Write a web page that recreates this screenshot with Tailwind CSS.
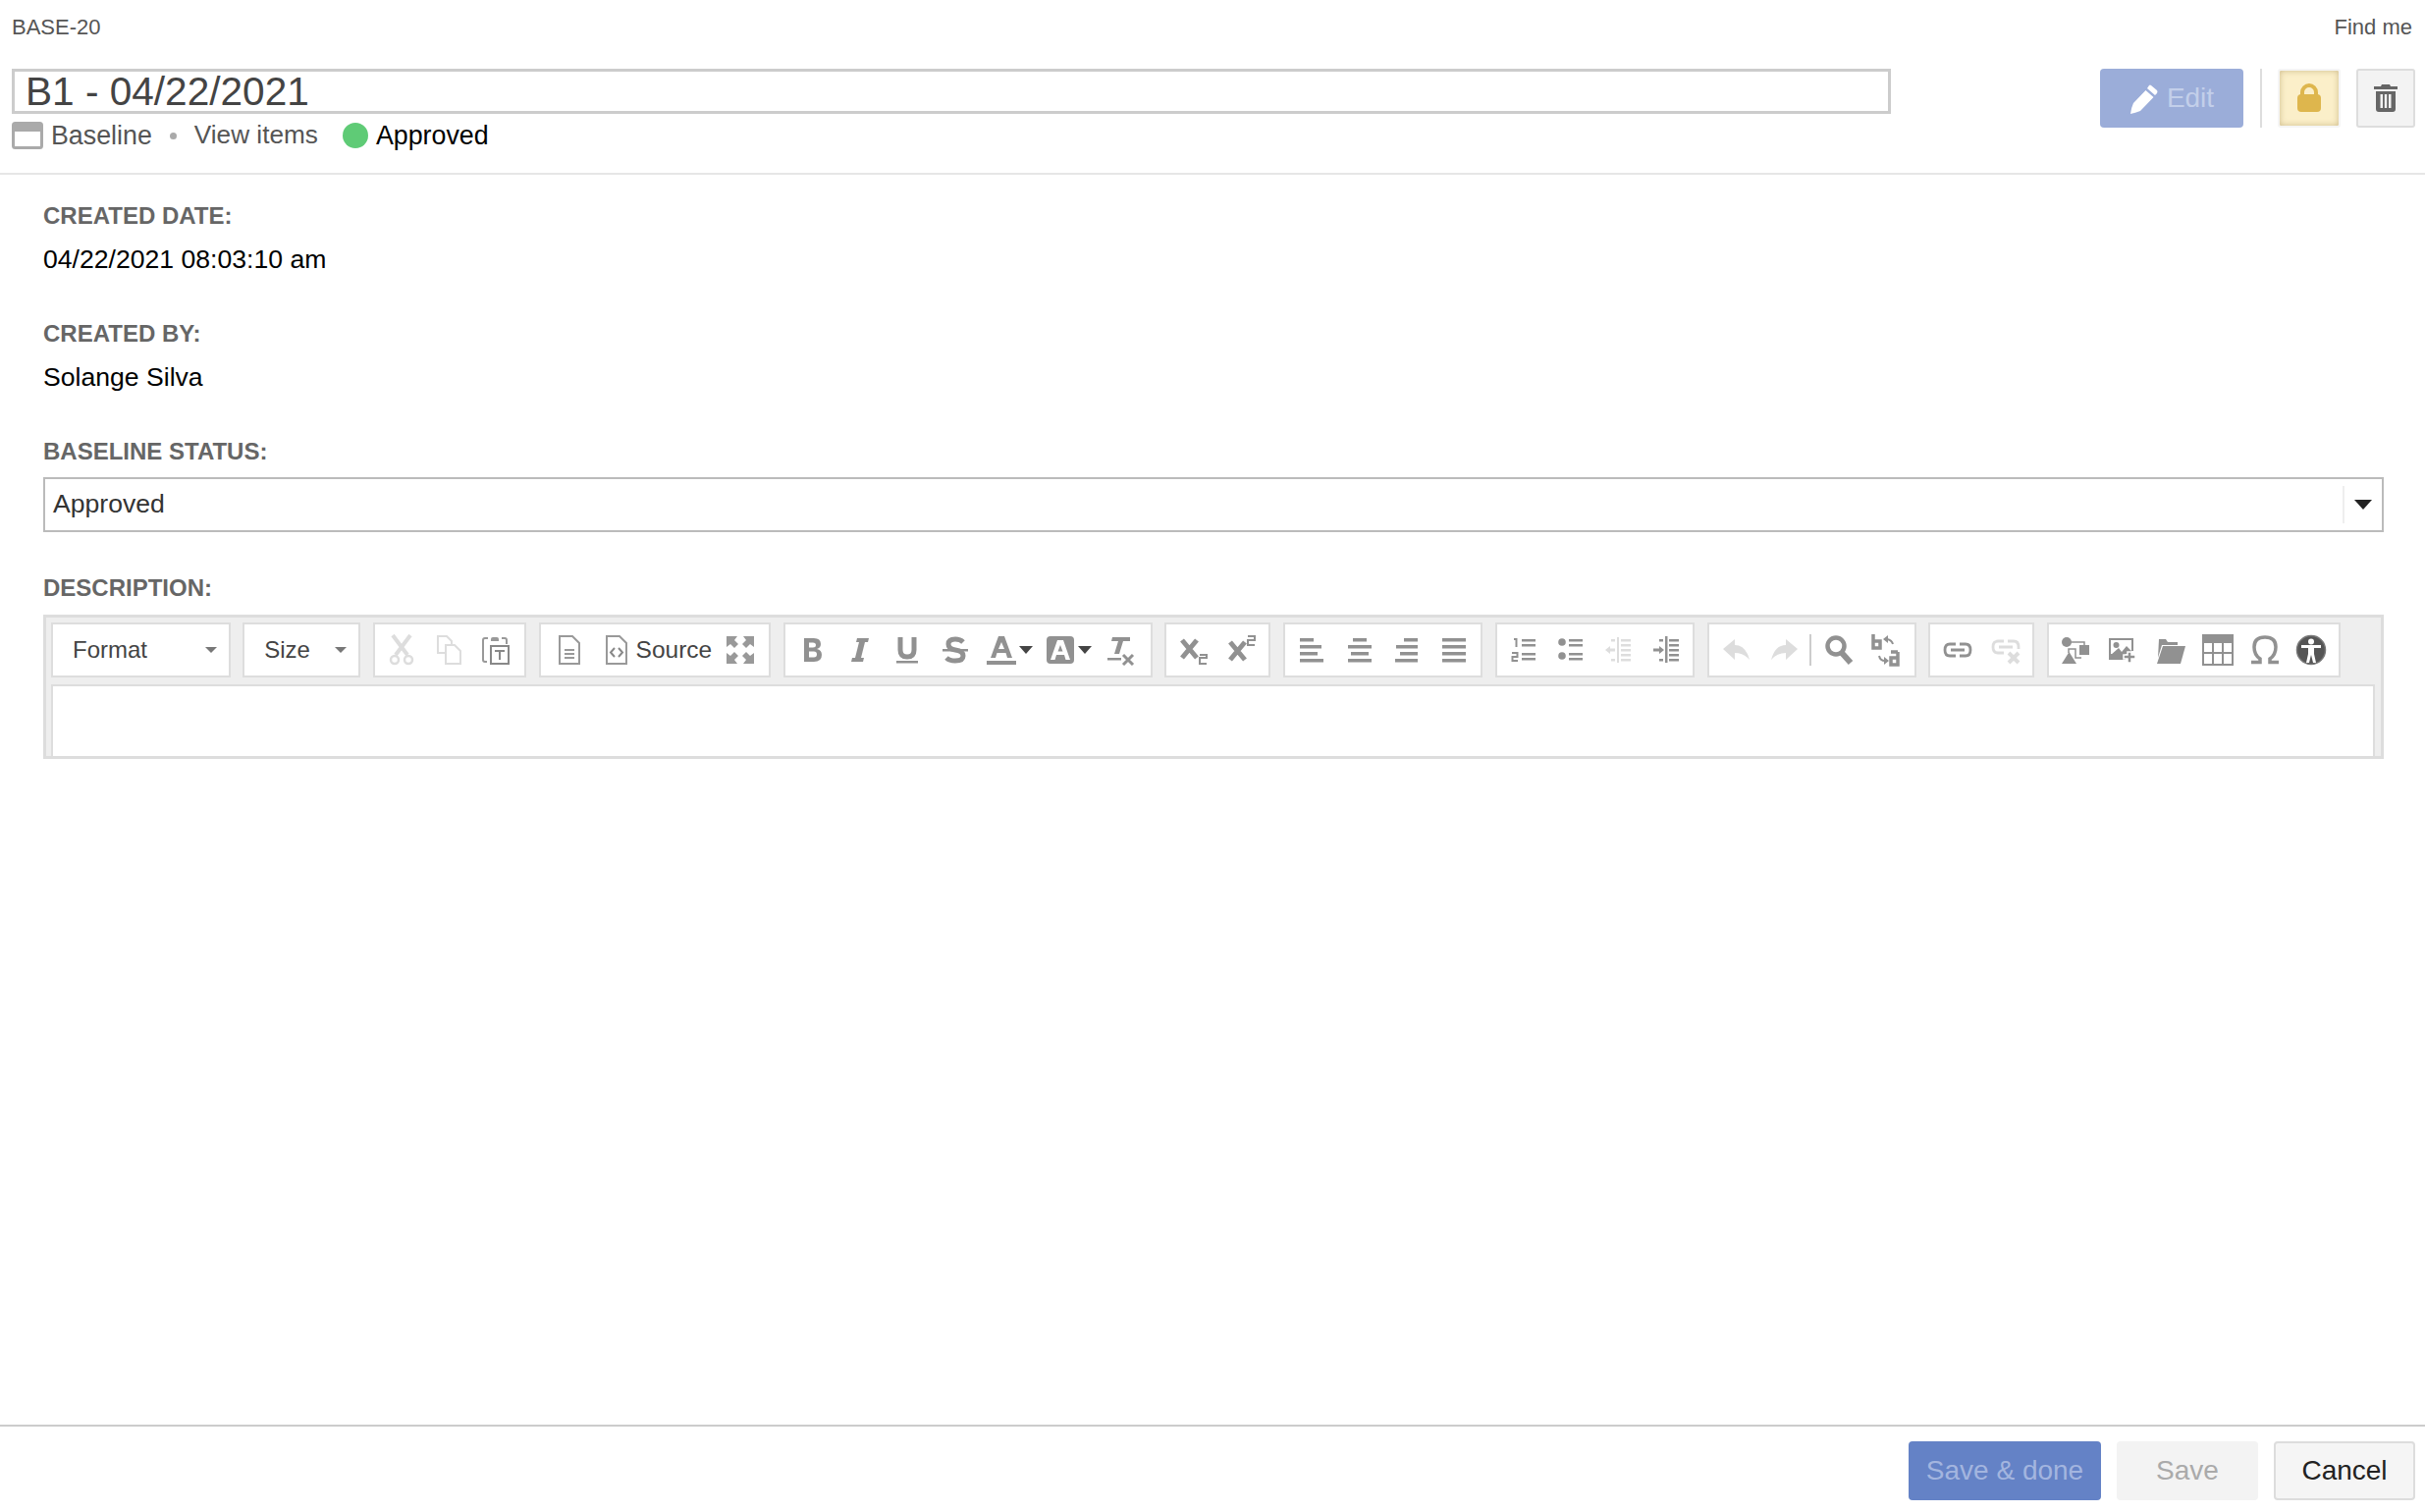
<!DOCTYPE html>
<html lang="en">
<head>
    <meta charset="UTF-8">
    <title>BASE-20</title>
    <script src="https://cdn.jsdelivr.net/npm/@tailwindcss/browser@4"></script>
</head>
<body class="bg-white h-[1540px] w-[2470px] overflow-hidden flex flex-col font-['Liberation_Sans',Arial,sans-serif]">

    <!-- header -->
    <header class="h-[178px] shrink-0 border-b-[2px] border-[#e6e6e6] px-[12px] flex flex-col">
        <div class="flex justify-between items-center h-[54px] text-[22px] text-[#555] pr-[1px]">
            <span>BASE-20</span>
            <span>Find me</span>
        </div>
        <div class="flex justify-between mt-[16px]">
            <div class="flex flex-col">
                <div class="w-[1914px] h-[46px] border-[3px] border-[#ccc] pl-[11px] flex items-center text-[40.6px] text-[#444]">B1 - 04/22/2021</div>
                <div class="flex items-center h-[44px] text-[26.8px] text-[#555]">
                    <svg class="w-[32px] h-[28px] mr-[8px]" viewBox="0 0 32 28"><rect x="1.500" y="1.500" width="29" height="25" rx="2" fill="#fff" stroke="#aaa" stroke-width="3"/><rect x="1" y="1" width="30" height="9" rx="2" fill="#aaa"/></svg>
                    <span>Baseline</span>
                    <span class="w-[7px] h-[7px] rounded-full bg-[#aaa] ml-[18px] mr-[18px]"></span>
                    <span class="text-[26.2px]">View items</span>
                    <span class="w-[26px] h-[26px] rounded-full bg-[#5fcb76] ml-[25px] mr-[8px]"></span>
                    <span class="text-black">Approved</span>
                </div>
            </div>
            <div class="flex items-start mr-[-2px]">
                <button class="w-[146px] h-[60px] rounded-[4px] bg-[#9badd9] flex items-center justify-center text-[28px] text-[#c3cfea]">
                    <svg class="w-[30px] h-[32px] mr-[8px]" viewBox="0 0 30 32"><path d="M22 3 L28 8 Q29 9 28 11 L26 13 L18 6 L20 3 Q21 2 22 3Z M16.500 8 L24.500 15 L11 29 Q6 31 1 32 Q2 25 4 21Z" fill="#fff"/></svg>
                    Edit
                </button>
                <span class="w-[2px] h-[60px] bg-[#ddd] ml-[17px] mr-[16px]"></span>
                <button class="w-[64px] h-[60px] rounded-[3px] border-[2px] border-[#f5f5f5] bg-[#fbefc9] shadow-[inset_0_0_6px_rgba(120,90,20,0.35)] flex items-center justify-center">
                    <svg class="w-[26px] h-[30px]" viewBox="0 0 26 30"><path d="M6 13 V9 A7 7 0 0 1 20 9 V13" fill="none" stroke="#deb64d" stroke-width="4"/><rect x="1" y="11" width="24" height="18" rx="4" fill="#deb64d"/></svg>
                </button>
                <button class="w-[60px] h-[60px] ml-[16px] rounded-[3px] border-[2px] border-[#ddd] bg-[#f3f3f3] flex items-center justify-center">
                    <svg class="w-[26px] h-[30px]" viewBox="0 0 26 30"><path d="M9 1 H17 L18 3 H25 V6 H1 V3 H8Z" fill="#666"/><path d="M3 8 H23 V26 Q23 29 20 29 H6 Q3 29 3 26Z M7.500 11 V25 H10 V11Z M11.800 11 V25 H14.200 V11Z M16 11 V25 H18.500 V11Z" fill="#666" fill-rule="evenodd"/></svg>
                </button>
            </div>
        </div>
    </header>

    <!-- form -->
    <main class="flex-1 pl-[44px] pr-[42px] pt-[27px]">
        <div class="text-[24px] font-bold text-[#666] leading-[30px]">CREATED DATE:</div>
        <div class="text-[26.6px] text-black leading-[30px] mt-[14px]">04/22/2021 08:03:10 am</div>

        <div class="text-[24px] font-bold text-[#666] leading-[30px] mt-[46px]">CREATED BY:</div>
        <div class="text-[26.6px] text-black leading-[30px] mt-[14px]">Solange Silva</div>

        <div class="text-[24px] font-bold text-[#666] leading-[30px] mt-[46px]">BASELINE STATUS:</div>
        <div class="mt-[11px] h-[56px] border-[2px] border-[#bbb] flex items-center pl-[8px] text-[26.6px] text-[#333]">
            <span class="flex-1">Approved</span>
            <span class="w-[40px] h-[38px] border-l-[2px] border-[#eee] flex items-center justify-center">
                <svg class="w-[18px] h-[10px]" viewBox="0 0 18 10"><path d="M0 0 H18 L9 10Z" fill="#222"/></svg>
            </span>
        </div>

        <div class="text-[24px] font-bold text-[#666] leading-[30px] mt-[42px]">DESCRIPTION:</div>

        <!-- editor -->
        <div class="mt-[12px] h-[147px] bg-[#eee] border-[3px] border-[#ddd] px-[5px] pt-[5px] flex flex-col">
            <div class="flex gap-[12.700px] h-[56px]">
                <div class="w-[182.500px] bg-white border-[2px] border-[#ddd] flex items-center justify-between pl-[20px] pr-[12px] text-[24px] text-[#444]">
                    Format
                    <svg class="w-[12px] h-[6px]" viewBox="0 0 12 6"><path d="M0 0 H12 L6 6Z" fill="#777"/></svg>
                </div>
                <div class="w-[120px] bg-white border-[2px] border-[#ddd] flex items-center justify-between pl-[20px] pr-[12px] text-[24px] text-[#444]">
                    Size
                    <svg class="w-[12px] h-[6px]" viewBox="0 0 12 6"><path d="M0 0 H12 L6 6Z" fill="#777"/></svg>
                </div>

                <div class="bg-white border-[2px] border-[#ddd] flex items-center w-[156px] px-[3px]">
                    <span class="w-[48px] flex justify-center">
                        <svg class="w-[32px] h-[32px]" viewBox="0 0 32 32"><path d="M7 1 L22 21 M25 1 L10 21" stroke="#ddd" stroke-width="4" fill="none"/><circle cx="9" cy="26" r="4" fill="none" stroke="#ddd" stroke-width="2.500"/><circle cx="23" cy="26" r="4" fill="none" stroke="#ddd" stroke-width="2.500"/></svg>
                    </span>
                    <span class="w-[48px] flex justify-center">
                        <svg class="w-[32px] h-[32px]" viewBox="0 0 32 32"><path d="M12 19 H5 V2 H14 L19 7 V10" fill="none" stroke="#ddd" stroke-width="2"/><path d="M13 11 H22 L28 17 V30 H13Z" fill="none" stroke="#ddd" stroke-width="2"/></svg>
                    </span>
                    <span class="w-[48px] flex justify-center">
                        <svg class="w-[32px] h-[32px]" viewBox="0 0 32 32"><path d="M8 4 H5 Q3 4 3 6 V26 Q3 28 5 28 H7 M22 4 H25 Q27 4 27 6 V10" fill="none" stroke="#999" stroke-width="2"/><path d="M11 5 Q11 3 13 3 H17 Q19 3 19 5 V7 H11Z" fill="#999"/><rect x="11" y="12" width="18" height="18" fill="none" stroke="#888" stroke-width="2"/><path d="M15 17 H25 M20 17 V26" stroke="#888" stroke-width="2"/></svg>
                    </span>
                </div>

                <div class="bg-white border-[2px] border-[#ddd] flex items-center w-[236.500px] pl-[13px]">
                    <svg class="w-[32px] h-[32px] mr-[16px]" viewBox="0 0 32 32"><path d="M6 2 H19 L26 9 V30 H6Z" fill="none" stroke="#999" stroke-width="2"/><path d="M11 16 H21 M11 20 H21 M11 24 H21" stroke="#999" stroke-width="2"/></svg>
                    <svg class="w-[32px] h-[32px] mr-[4px]" viewBox="0 0 32 32"><path d="M6 2 H19 L26 9 V30 H6Z" fill="none" stroke="#999" stroke-width="2"/><path d="M14 14 L10 18.500 L14 23 M18 14 L22 18.500 L18 23" fill="none" stroke="#888" stroke-width="2"/></svg>
                    <span class="text-[24.500px] text-[#444] w-[84px]">Source</span>
                    <svg class="w-[30px] h-[30px] ml-[7px]" viewBox="0 0 30 30"><g fill="#999"><path d="M1 1 H12 L9 5 L13 9 L9 13 L5 9 L1 12Z"/><path d="M29 1 H18 L21 5 L17 9 L21 13 L25 9 L29 12Z"/><path d="M1 29 H12 L9 25 L13 21 L9 17 L5 21 L1 18Z"/><path d="M29 29 H18 L21 25 L17 21 L21 17 L25 21 L29 18Z"/></g></svg>
                </div>

                <div class="bg-white border-[2px] border-[#ddd] flex items-center w-[376px] pl-[3px]">
                    <span class="w-[48.500px] flex justify-center">
                        <svg class="w-[32px] h-[32px]" viewBox="0 0 32 32"><path d="M8 4 H18 Q25 4 25 10 Q25 14 21 15 Q26 16 26 21 Q26 28 18 28 H8Z M13 8.500 V13.500 H17 Q20 13.500 20 11 Q20 8.500 17 8.500Z M13 17.500 V23.500 H18 Q21 23.500 21 20.500 Q21 17.500 18 17.500Z" fill="#919191" fill-rule="evenodd"/></svg>
                    </span>
                    <span class="w-[48.500px] flex justify-center">
                        <svg class="w-[32px] h-[32px]" viewBox="0 0 32 32"><path d="M13 4 H25 L24 8 H21 L17 24 H20 L19 28 H7 L8 24 H11 L15 8 H12Z" fill="#919191"/></svg>
                    </span>
                    <span class="w-[48.500px] flex justify-center">
                        <svg class="w-[32px] h-[32px]" viewBox="0 0 32 32"><path d="M9 3 V16 Q9 23 16 23 Q23 23 23 16 V3" fill="none" stroke="#919191" stroke-width="5"/><rect x="5" y="27" width="22" height="2.500" fill="#919191"/></svg>
                    </span>
                    <span class="w-[48.500px] flex justify-center">
                        <svg class="w-[32px] h-[32px]" viewBox="0 0 32 32"><path d="M24 8 Q21 5 16 5 Q9 5 9 10 Q9 15 16 16 Q24 17 24 22 Q24 27 16 27 Q10 27 7 24" fill="none" stroke="#919191" stroke-width="5"/><rect x="3" y="15" width="26" height="2.500" fill="#919191"/></svg>
                    </span>
                    <span class="w-[60px] flex items-center pl-[7px]">
                        <svg class="w-[32px] h-[32px]" viewBox="0 0 32 32"><path d="M13 2 H19 L27 24 H22 L20.500 19 H11.500 L10 24 H5Z M16 8 L13 15 H19Z" fill="#919191" fill-rule="evenodd"/><rect x="1" y="27" width="30" height="4" fill="#919191"/></svg>
                        <svg class="w-[14px] h-[8px] ml-[2px]" viewBox="0 0 14 8"><path d="M0 0 H14 L7 8Z" fill="#444"/></svg>
                    </span>
                    <span class="w-[60px] flex items-center pl-[7px]">
                        <svg class="w-[28px] h-[28px] ml-[2px]" viewBox="0 0 28 28"><rect width="28" height="28" rx="4" fill="#919191"/><path d="M11 4 H17 L24 24 H19.500 L18 19 H10 L8.500 24 H4Z M14 9 L11.500 15.500 H16.500Z" fill="#fff" fill-rule="evenodd"/></svg>
                        <svg class="w-[14px] h-[8px] ml-[4px]" viewBox="0 0 14 8"><path d="M0 0 H14 L7 8Z" fill="#444"/></svg>
                    </span>
                    <span class="w-[48px] flex justify-center">
                        <svg class="w-[32px] h-[32px]" viewBox="0 0 32 32"><path d="M8 3 H26 V7 H19 L15 20 H10 L14 7 H7Z" fill="#919191"/><rect x="3" y="24" width="14" height="2.500" fill="#919191"/><path d="M19 21 L29 31 M29 21 L19 31" stroke="#919191" stroke-width="3"/></svg>
                    </span>
                </div>

                <div class="bg-white border-[2px] border-[#ddd] flex items-center w-[108px] px-[3px]">
                    <span class="w-[49px] flex justify-center">
                        <svg class="w-[32px] h-[32px]" viewBox="0 0 32 32"><path d="M4 6 L19 24 M19 6 L4 24" stroke="#919191" stroke-width="5"/><path d="M22 21 H29 V24 H22 V30 H29" fill="none" stroke="#919191" stroke-width="2"/></svg>
                    </span>
                    <span class="w-[49px] flex justify-center">
                        <svg class="w-[32px] h-[32px]" viewBox="0 0 32 32"><path d="M4 8 L19 26 M19 8 L4 26" stroke="#919191" stroke-width="5"/><path d="M22 2 H29 V6 H22 V11 H29" fill="none" stroke="#919191" stroke-width="2"/></svg>
                    </span>
                </div>

                <div class="bg-white border-[2px] border-[#ddd] flex items-center w-[203px] px-[3px]">
                    <span class="w-[48.500px] flex justify-center">
                        <svg class="w-[26px] h-[32px]" viewBox="0 0 26 32"><g fill="#919191"><rect x="1" y="4" width="14" height="3.500"/><rect x="1" y="11" width="22" height="3.500"/><rect x="1" y="18" width="18" height="3.500"/><rect x="1" y="25" width="24" height="3.500"/></g></svg>
                    </span>
                    <span class="w-[48.500px] flex justify-center">
                        <svg class="w-[26px] h-[32px]" viewBox="0 0 26 32"><g fill="#919191"><rect x="6" y="4" width="14" height="3.500"/><rect x="1" y="11" width="24" height="3.500"/><rect x="4" y="18" width="18" height="3.500"/><rect x="1" y="25" width="24" height="3.500"/></g></svg>
                    </span>
                    <span class="w-[48.500px] flex justify-center">
                        <svg class="w-[26px] h-[32px]" viewBox="0 0 26 32"><g fill="#919191"><rect x="10" y="4" width="14" height="3.500"/><rect x="2" y="11" width="22" height="3.500"/><rect x="6" y="18" width="18" height="3.500"/><rect x="1" y="25" width="23" height="3.500"/></g></svg>
                    </span>
                    <span class="w-[48.500px] flex justify-center">
                        <svg class="w-[26px] h-[32px]" viewBox="0 0 26 32"><g fill="#919191"><rect x="1" y="4" width="24" height="3.500"/><rect x="1" y="11" width="24" height="3.500"/><rect x="1" y="18" width="24" height="3.500"/><rect x="1" y="25" width="24" height="3.500"/></g></svg>
                    </span>
                </div>

                <div class="bg-white border-[2px] border-[#ddd] flex items-center w-[203px] px-[3px]">
                    <span class="w-[48.500px] flex justify-center">
                        <svg class="w-[26px] h-[32px]" viewBox="0 0 26 32"><g fill="none" stroke="#919191" stroke-width="2"><path d="M3 5 H5.500 V13"/><path d="M1 19 H6.500 V23 H1.500 V27 H7"/></g><g fill="#919191"><rect x="11" y="5" width="14" height="2.500"/><rect x="11" y="10" width="14" height="2.500"/><rect x="11" y="19" width="14" height="2.500"/><rect x="11" y="24" width="14" height="2.500"/></g></svg>
                    </span>
                    <span class="w-[48.500px] flex justify-center">
                        <svg class="w-[28px] h-[32px]" viewBox="0 0 28 32"><g fill="#919191"><circle cx="5" cy="8" r="3.800"/><circle cx="5" cy="22" r="3.800"/><rect x="12" y="5" width="14" height="2.500"/><rect x="12" y="10" width="14" height="2.500"/><rect x="12" y="19" width="14" height="2.500"/><rect x="12" y="24" width="14" height="2.500"/></g></svg>
                    </span>
                    <span class="w-[48.500px] flex justify-center">
                        <svg class="w-[28px] h-[32px]" viewBox="0 0 28 32"><g fill="#ddd"><rect x="13" y="3" width="2" height="26"/><rect x="17" y="5" width="10" height="2.500"/><rect x="17" y="10" width="10" height="2.500"/><rect x="17" y="15" width="10" height="2.500"/><rect x="17" y="20" width="10" height="2.500"/><rect x="17" y="25" width="10" height="2.500"/><rect x="7" y="5" width="4" height="2.500"/><rect x="7" y="25" width="4" height="2.500"/><path d="M1 16 L6 12 V14.500 H11 V17.500 H6 V20Z"/></g></svg>
                    </span>
                    <span class="w-[48.500px] flex justify-center">
                        <svg class="w-[28px] h-[32px]" viewBox="0 0 28 32"><g fill="#919191"><rect x="13" y="2" width="2.500" height="27"/><rect x="17" y="5" width="10" height="2.500"/><rect x="17" y="10" width="10" height="2.500"/><rect x="17" y="15" width="10" height="2.500"/><rect x="17" y="20" width="10" height="2.500"/><rect x="17" y="25" width="10" height="2.500"/><rect x="7" y="5" width="4" height="2.500"/><rect x="7" y="25" width="4" height="2.500"/><path d="M12 16 L7 12 V14.500 H1 V17.500 H7 V20Z"/></g></svg>
                    </span>
                </div>

                <div class="bg-white border-[2px] border-[#ddd] flex items-center w-[213px] pl-[4px]">
                    <span class="w-[48px] flex justify-center">
                        <svg class="w-[30px] h-[32px]" viewBox="0 0 30 32"><path d="M13 5 V11 Q24 11 28 26 Q22 19 13 19 V26 L1 15Z" fill="#ddd"/></svg>
                    </span>
                    <span class="w-[48px] flex justify-center">
                        <svg class="w-[30px] h-[32px]" viewBox="0 0 30 32"><path d="M17 5 V11 Q6 11 2 26 Q8 19 17 19 V26 L29 15Z" fill="#ddd"/></svg>
                    </span>
                    <span class="w-[2px] h-[32px] bg-[#ccc] mr-[4px] ml-[2px]"></span>
                    <span class="w-[48px] flex justify-center">
                        <svg class="w-[32px] h-[32px]" viewBox="0 0 32 32"><circle cx="13" cy="12" r="8.500" fill="none" stroke="#919191" stroke-width="4.500"/><path d="M19 19 L28 29" stroke="#919191" stroke-width="6"/></svg>
                    </span>
                    <span class="w-[48px] flex justify-center">
                        <svg class="w-[32px] h-[34px]" viewBox="0 0 32 34"><g fill="none" stroke="#919191" stroke-width="3.500"><path d="M3 1 V15 H10 V8 H3"/><path d="M28 19 H21 M28 19 V32 H21 V25 H28"/></g><path d="M23 11 Q22 7 17 6 M9 23 Q10 28 15 28" fill="none" stroke="#919191" stroke-width="2"/><path d="M18 2 L13 6 L18 10Z M14 24 L19 28 L14 32Z" fill="#919191"/></svg>
                    </span>
                </div>

                <div class="bg-white border-[2px] border-[#ddd] flex items-center w-[108px] px-[3px]">
                    <span class="w-[49px] flex justify-center">
                        <svg class="w-[32px] h-[32px]" viewBox="0 0 32 32"><path d="M14 10 H8 Q3 10 3 16 Q3 22 8 22 H14 M18 10 H24 Q29 10 29 16 Q29 22 24 22 H18 M9 16 H23" fill="none" stroke="#919191" stroke-width="2.800"/></svg>
                    </span>
                    <span class="w-[49px] flex justify-center">
                        <svg class="w-[32px] h-[32px]" viewBox="0 0 32 32"><path d="M14 7 H8 Q3 7 3 13 Q3 19 8 19 H14 M18 7 H24 Q29 7 29 13 V15 M9 13 H23" fill="none" stroke="#ddd" stroke-width="2.800"/><path d="M19 19 L29 29 M29 19 L19 29" stroke="#ddd" stroke-width="4"/></svg>
                    </span>
                </div>

                <div class="bg-white border-[2px] border-[#ddd] flex items-center w-[299px] pl-[3px]">
                    <span class="w-[48px] flex justify-center">
                        <svg class="w-[32px] h-[32px]" viewBox="0 0 32 32"><path d="M7 8 H25 V12 M9 19 V15 H16 V24 H22" fill="none" stroke="#919191" stroke-width="1.500"/><g fill="#919191"><circle cx="7" cy="8" r="5"/><path d="M9.500 18 L17 30 H2Z"/><rect x="20" y="11" width="10" height="10"/></g></svg>
                    </span>
                    <span class="w-[49px] flex justify-center">
                        <svg class="w-[32px] h-[32px]" viewBox="0 0 32 32"><path d="M2 4 H27 V17 H19 V26 H2Z" fill="#919191"/><rect x="4" y="6" width="21" height="14" fill="#fff"/><circle cx="9.500" cy="11" r="3" fill="#919191"/><path d="M4 21 L12 14 L15 18 L20 12 L25 17 V20 H19 V24 H4Z" fill="#919191"/><path d="M21 18 H25 V21 H29 V25 H25 V29 H21 V25 H17 V21 H21Z" fill="#919191" stroke="#fff" stroke-width="1.500"/></svg>
                    </span>
                    <span class="w-[49px] flex justify-center">
                        <svg class="w-[32px] h-[32px]" viewBox="0 0 32 32"><path d="M4 5 H11 L13 8 H23 V11 H7 L3 24Z" fill="#919191"/><path d="M8 12 H31 L26 30 H2Z" fill="#919191"/></svg>
                    </span>
                    <span class="w-[47px] flex justify-center">
                        <svg class="w-[32px] h-[32px]" viewBox="0 0 32 32"><rect x="1" y="1" width="30" height="30" fill="none" stroke="#919191" stroke-width="2"/><rect x="1" y="1" width="30" height="8" fill="#919191"/><path d="M11 9 V31 M21 9 V31 M1 19 H31" stroke="#919191" stroke-width="2"/></svg>
                    </span>
                    <span class="w-[49px] flex justify-center">
                        <svg class="w-[30px] h-[32px]" viewBox="0 0 30 32"><path d="M1 28.500 H10 V25 Q4 21 4 13 Q4 3 15 3 Q26 3 26 13 Q26 21 20 25 V28.500 H29" fill="none" stroke="#919191" stroke-width="3.500"/></svg>
                    </span>
                    <span class="w-[44px] flex justify-center">
                        <svg class="w-[32px] h-[32px]" viewBox="0 0 32 32"><circle cx="16" cy="16" r="14.500" fill="#555" stroke="#777" stroke-width="1.500"/><circle cx="16" cy="7.500" r="3" fill="#fff"/><path d="M6 11 H26 V14 H19 V20 L21 29 H18 L16 21 L14 29 H11 L13 20 V14 H6Z" fill="#fff"/></svg>
                    </span>
                </div>
            </div>
            <div class="mt-[7px] mr-[1px] flex-1 bg-white border-[2px] border-[#ddd] border-b-0"></div>
        </div>
    </main>

    <!-- footer -->
    <footer class="h-[89px] shrink-0 border-t-[2px] border-[#ccc] flex justify-end items-start gap-[16px] pt-[15px] pr-[10px] text-[28px]">
        <button class="w-[196px] h-[60px] rounded-[4px] bg-[#6482c6] text-[#a3b5df]">Save &amp; done</button>
        <button class="w-[144px] h-[60px] rounded-[4px] bg-[#f3f3f3] text-[#aaa]">Save</button>
        <button class="w-[144px] h-[60px] rounded-[4px] bg-[#f5f5f5] border-[2px] border-[#ddd] text-[#222]">Cancel</button>
    </footer>
</body>
</html>
